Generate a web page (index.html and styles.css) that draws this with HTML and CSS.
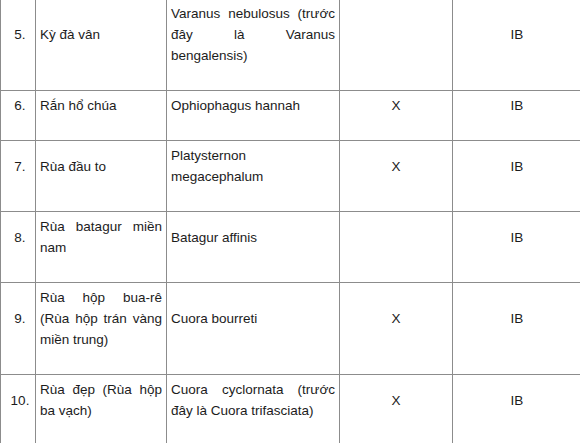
FILE: index.html
```html
<!DOCTYPE html>
<html lang="vi">
<head>
<meta charset="utf-8">
<title>Danh mục loài</title>
<link rel="stylesheet" href="styles.css">
</head>
<body>
<table class="species">
  <colgroup>
    <col class="c-no">
    <col class="c-name">
    <col class="c-sci">
    <col class="c-mark">
    <col class="c-group">
  </colgroup>
  <tbody>
    <tr>
      <td class="no">5.</td>
      <td class="txt">Kỳ đà vân</td>
      <td class="txt">Varanus nebulosus (trước đây là Varanus bengalensis)</td>
      <td class="mid"></td>
      <td class="mid">IB</td>
    </tr>
    <tr>
      <td class="no">6.</td>
      <td class="txt">Rắn hổ chúa</td>
      <td class="txt">Ophiophagus hannah</td>
      <td class="mid">X</td>
      <td class="mid">IB</td>
    </tr>
    <tr>
      <td class="no">7.</td>
      <td class="txt">Rùa đầu to</td>
      <td class="txt">Platysternon megacephalum</td>
      <td class="mid">X</td>
      <td class="mid">IB</td>
    </tr>
    <tr>
      <td class="no">8.</td>
      <td class="txt">Rùa batagur miền nam</td>
      <td class="txt">Batagur affinis</td>
      <td class="mid"></td>
      <td class="mid">IB</td>
    </tr>
    <tr>
      <td class="no">9.</td>
      <td class="txt">Rùa hộp bua-rê (Rùa hộp trán vàng miền trung)</td>
      <td class="txt">Cuora bourreti</td>
      <td class="mid">X</td>
      <td class="mid">IB</td>
    </tr>
    <tr class="last">
      <td class="no">10.</td>
      <td class="txt">Rùa đẹp (Rùa hộp ba vạch)</td>
      <td class="txt">Cuora cyclornata (trước đây là Cuora trifasciata)</td>
      <td class="mid">X</td>
      <td class="mid">IB</td>
    </tr>
  </tbody>
</table>
</body>
</html>
```
FILE: styles.css
```css
html, body {
  margin: 0;
  padding: 0;
  overflow: hidden;
  background: #ffffff;
}

.species {
  border-collapse: collapse;
  table-layout: fixed;
  width: 581px;
  margin-top: -2px;
  font-family: "Liberation Sans", Arial, sans-serif;
  font-size: 13.5px;
  line-height: 21px;
  color: #1c1c1c;
}

.c-no { width: 35px; }
.c-name { width: 131px; }
.c-sci { width: 173px; }
.c-mark { width: 113px; }
.c-group { width: 129px; }

.species td {
  border: 1px solid #8c8c8c;
  padding: 4px 4px 24px 4px;
  vertical-align: middle;
}

.species td.no {
  text-align: center;
  padding-left: 6px;
  padding-right: 2px;
}

.species td.txt {
  text-align: justify;
}

.species td.mid {
  text-align: center;
}

.species tr.last td {
  padding-bottom: 34px;
}
```
